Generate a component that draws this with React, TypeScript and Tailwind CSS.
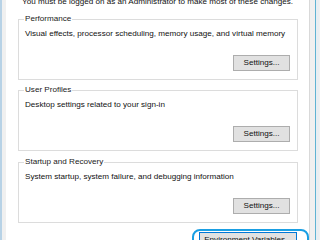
import React from "react";

const font = { fontFamily: '"Liberation Sans", Arial, sans-serif' };

function Btn({ label, w }: { label: string; w: string }) {
  return (
    <div
      className={`${w} h-[16px] shrink-0 bg-[#e1e1e1] border border-[#adadad] flex items-center justify-center text-[8.1px] leading-[10px] text-[#111]`}
    >
      {label}
    </div>
  );
}

function Group({ title, desc, mt }: { title: string; desc: string; mt: string }) {
  return (
    <div className={`${mt} shrink-0 ml-[12px] w-[280px] h-[61px] border border-[#dcdcdc] relative flex flex-col pl-[6px] pr-[7px] pt-[9px]`}>
      <span className="absolute -top-[6px] left-[5px] bg-white px-[1px] text-[8.1px] leading-[10px] text-[#222]">
        {title}
      </span>
      <div className="text-[8.1px] leading-[10px] text-[#111] whitespace-nowrap">{desc}</div>
      <div className="flex justify-end mt-[16px]">
        <Btn label="Settings..." w="w-[57px]" />
      </div>
    </div>
  );
}

export default function App() {
  return (
    <div className="w-[320px] h-[240px] overflow-hidden bg-[#f0f0f0] flex" style={font}>
      <div className="w-[2px] h-full bg-[#b7d2e6]" />
      <div className="w-[4px] h-full bg-[#f0f0f0]" />
      <div className="w-[304px] h-full bg-white flex flex-col border-r border-[#d9d9d9] overflow-hidden">
        <div className="shrink-0 mt-[-3px] ml-[16px] text-[8.1px] leading-[10px] text-[#111] whitespace-nowrap">
          You must be logged on as an Administrator to make most of these changes.
        </div>
        <Group
          mt="mt-[12px]"
          title="Performance"
          desc="Visual effects, processor scheduling, memory usage, and virtual memory"
        />
        <Group mt="mt-[10px]" title="User Profiles" desc="Desktop settings related to your sign-in" />
        <Group
          mt="mt-[11px]"
          title="Startup and Recovery"
          desc="System startup, system failure, and debugging information"
        />
        <div className="shrink-0 mt-[9px] ml-[193px] relative w-[98px]">
          <div className="w-[98px] h-[16px] bg-[#e1e1e1] border border-[#0078d7] flex items-center justify-center text-[8.1px] leading-[10px] text-[#111]">
            Environment Variables...
          </div>
          <div className="absolute -left-[7px] -top-[3px] -right-[12px] h-[30px] rounded-[8px] border-2 border-[#1a9fe3]" />
        </div>
      </div>
      <div className="w-[5px] h-full bg-[#f0f0f0]" />
      <div className="w-[1px] h-full bg-[#5fb3d3]" />
      <div className="w-[3px] h-full bg-[#e8eef2]" />
    </div>
  );
}
